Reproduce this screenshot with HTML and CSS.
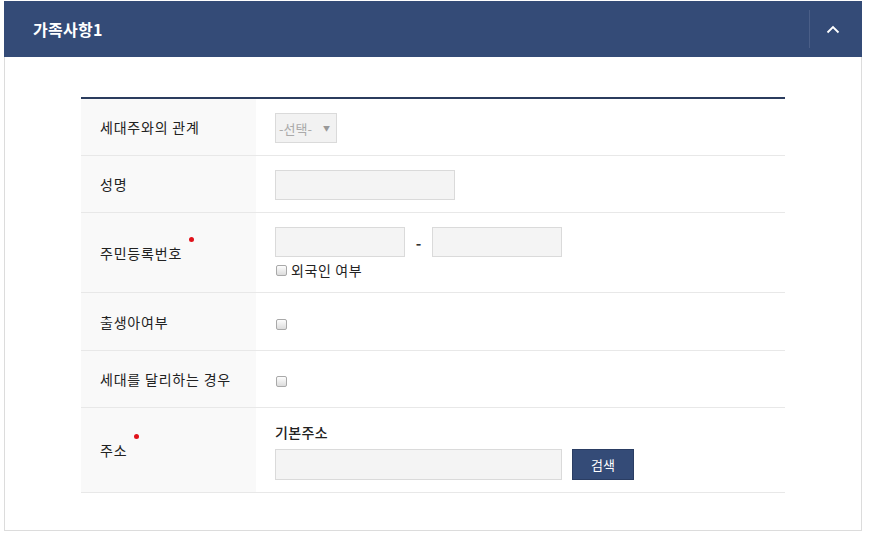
FILE: index.html
```html
<html>
    <head>
        <title>가족사항</title>
        <meta charset="UTF-8">
        <meta name="viewport" content="width=device-width, initial-scale=1.0">
        <link rel="stylesheet" href="styles.css">
    </head>
    <body>
        <div class="panel">
            <div class="panel-head">
                <h2 class="panel-title">가족사항1</h2>
                <div class="toggle">
                    <svg width="14" height="9" viewBox="0 0 14 9"><path d="M1.5 7.5 L7 2 L12.5 7.5" fill="none" stroke="#fff" stroke-width="1.8"/></svg>
                </div>
            </div>
            <div class="panel-body">
                <div class="form">
                    <div class="row">
                        <div class="label"><span>세대주와의 관계</span></div>
                        <div class="value">
                            <span class="select-wrap"><select class="select" disabled><option>-선택-</option></select></span>
                        </div>
                    </div>
                    <div class="row">
                        <div class="label"><span>성명</span></div>
                        <div class="value"><input class="input w180" type="text"></div>
                    </div>
                    <div class="row">
                        <div class="label"><span class="req">주민등록번호</span></div>
                        <div class="value">
                            <div class="line">
                                <input class="input w130" type="text">
                                <span class="dash">-</span>
                                <input class="input w130" type="text">
                            </div>
                            <label class="check"><input type="checkbox">외국인 여부</label>
                        </div>
                    </div>
                    <div class="row">
                        <div class="label"><span>출생아여부</span></div>
                        <div class="value tall"><label class="check"><input type="checkbox"></label></div>
                    </div>
                    <div class="row">
                        <div class="label"><span>세대를 달리하는 경우</span></div>
                        <div class="value"><label class="check"><input type="checkbox"></label></div>
                    </div>
                    <div class="row">
                        <div class="label"><span class="req">주소</span></div>
                        <div class="value">
                            <div class="sub-title">기본주소</div>
                            <div class="line">
                                <input class="input w286" type="text">
                                <button class="btn">검색</button>
                            </div>
                        </div>
                    </div>
                </div>
            </div>
        </div>
    </body>
</html>
```

FILE: styles.css
```css
body{
    margin: 0;
    background-color: #fff;
    font-family: "Noto Sans CJK KR", "Noto Sans", sans-serif;
    color: #222;
}

.panel{
    width: 856px;
    margin: 1px 0 0 4px;
    border: 1px solid #dcdcdc;
    border-top: 0px;
}

.panel-head{
    height: 56px;
    margin: 0 -1px;
    background-color: #344b77;
    display: flex;
    align-items: center;
}

.panel-title{
    flex: 1;
    margin: 0;
    padding-left: 29px;
    font-size: 16px;
    font-weight: bold;
    color: #fff;
    letter-spacing: 0.3px;
}

.toggle{
    width: 46px;
    height: 38px;
    padding-right: 6px;
    border-left: 1px solid #4a5e87;
    display: flex;
    align-items: center;
    justify-content: center;
}

.panel-body{
    padding: 40px 76px 37px 76px;
}

.form{
    border-top: 2px solid #2b3c5e;
}

.row{
    display: flex;
    border-bottom: 1px solid #e8e8e8;
}

.label{
    width: 156px;
    padding-left: 19px;
    background-color: #f9f9f9;
    display: flex;
    align-items: center;
    font-size: 14px;
    line-height: 20px;
    letter-spacing: 0.8px;
}

.req{
    position: relative;
}

.req::after{
    content: "";
    position: absolute;
    left: calc(100% + 7px);
    top: -6px;
    width: 5px;
    height: 5px;
    border-radius: 50%;
    background-color: #e0121b;
}

.value{
    flex: 1;
    padding: 14px 19px 12px 19px;
    min-height: 30px;
    display: flex;
    flex-direction: column;
    justify-content: center;
}

.value.tall{
    min-height: 31px;
}

.line{
    display: flex;
    align-items: center;
}

.input{
    height: 30px;
    box-sizing: border-box;
    background-color: #f4f4f4;
    border: 1px solid #dadada;
    margin: 0px;
}

.w180{ width: 180px; }
.w130{ width: 130px; }
.w286{ width: 287px; height: 31px; }

.dash{
    width: 27px;
    text-align: center;
    font-size: 15px;
    font-weight: bold;
    color: #333;
}

.select-wrap{
    position: relative;
    display: inline-block;
    width: 62px;
}

.select-wrap::after{
    content: "\25BC";
    position: absolute;
    right: 7px;
    top: 10px;
    font-size: 7px;
    color: #999;
}

.select{
    -webkit-appearance: none;
    appearance: none;
    width: 62px;
    height: 30px;
    padding: 0 0 0 3px;
    margin: 0px;
    background-color: #f2f2f2;
    border: 1px solid #dadada;
    border-radius: 0px;
    color: #aaa;
    font-family: "Noto Sans CJK KR", sans-serif;
    font-size: 13px;
    opacity: 1;
}

.check{
    display: flex;
    align-items: center;
    height: 20px;
    margin-top: 3px;
    font-size: 14px;
    letter-spacing: 0.6px;
}

.check input{
    -webkit-appearance: none;
    appearance: none;
    width: 11px;
    height: 11px;
    margin: 0 4px 0 1px;
    border: 1px solid #a9a9a9;
    border-radius: 2px;
    background: linear-gradient(#fdfdfd, #dcdcdc);
}

.sub-title{
    font-size: 14px;
    line-height: 20px;
    font-weight: 500;
    margin-bottom: 7px;
    letter-spacing: 0.4px;
}

.btn{
    width: 62px;
    height: 31px;
    margin-left: 10px;
    background-color: #344b77;
    border: 1px solid #2a3d63;
    color: #fff;
    font-family: "Noto Sans CJK KR", sans-serif;
    font-size: 13px;
}
```
